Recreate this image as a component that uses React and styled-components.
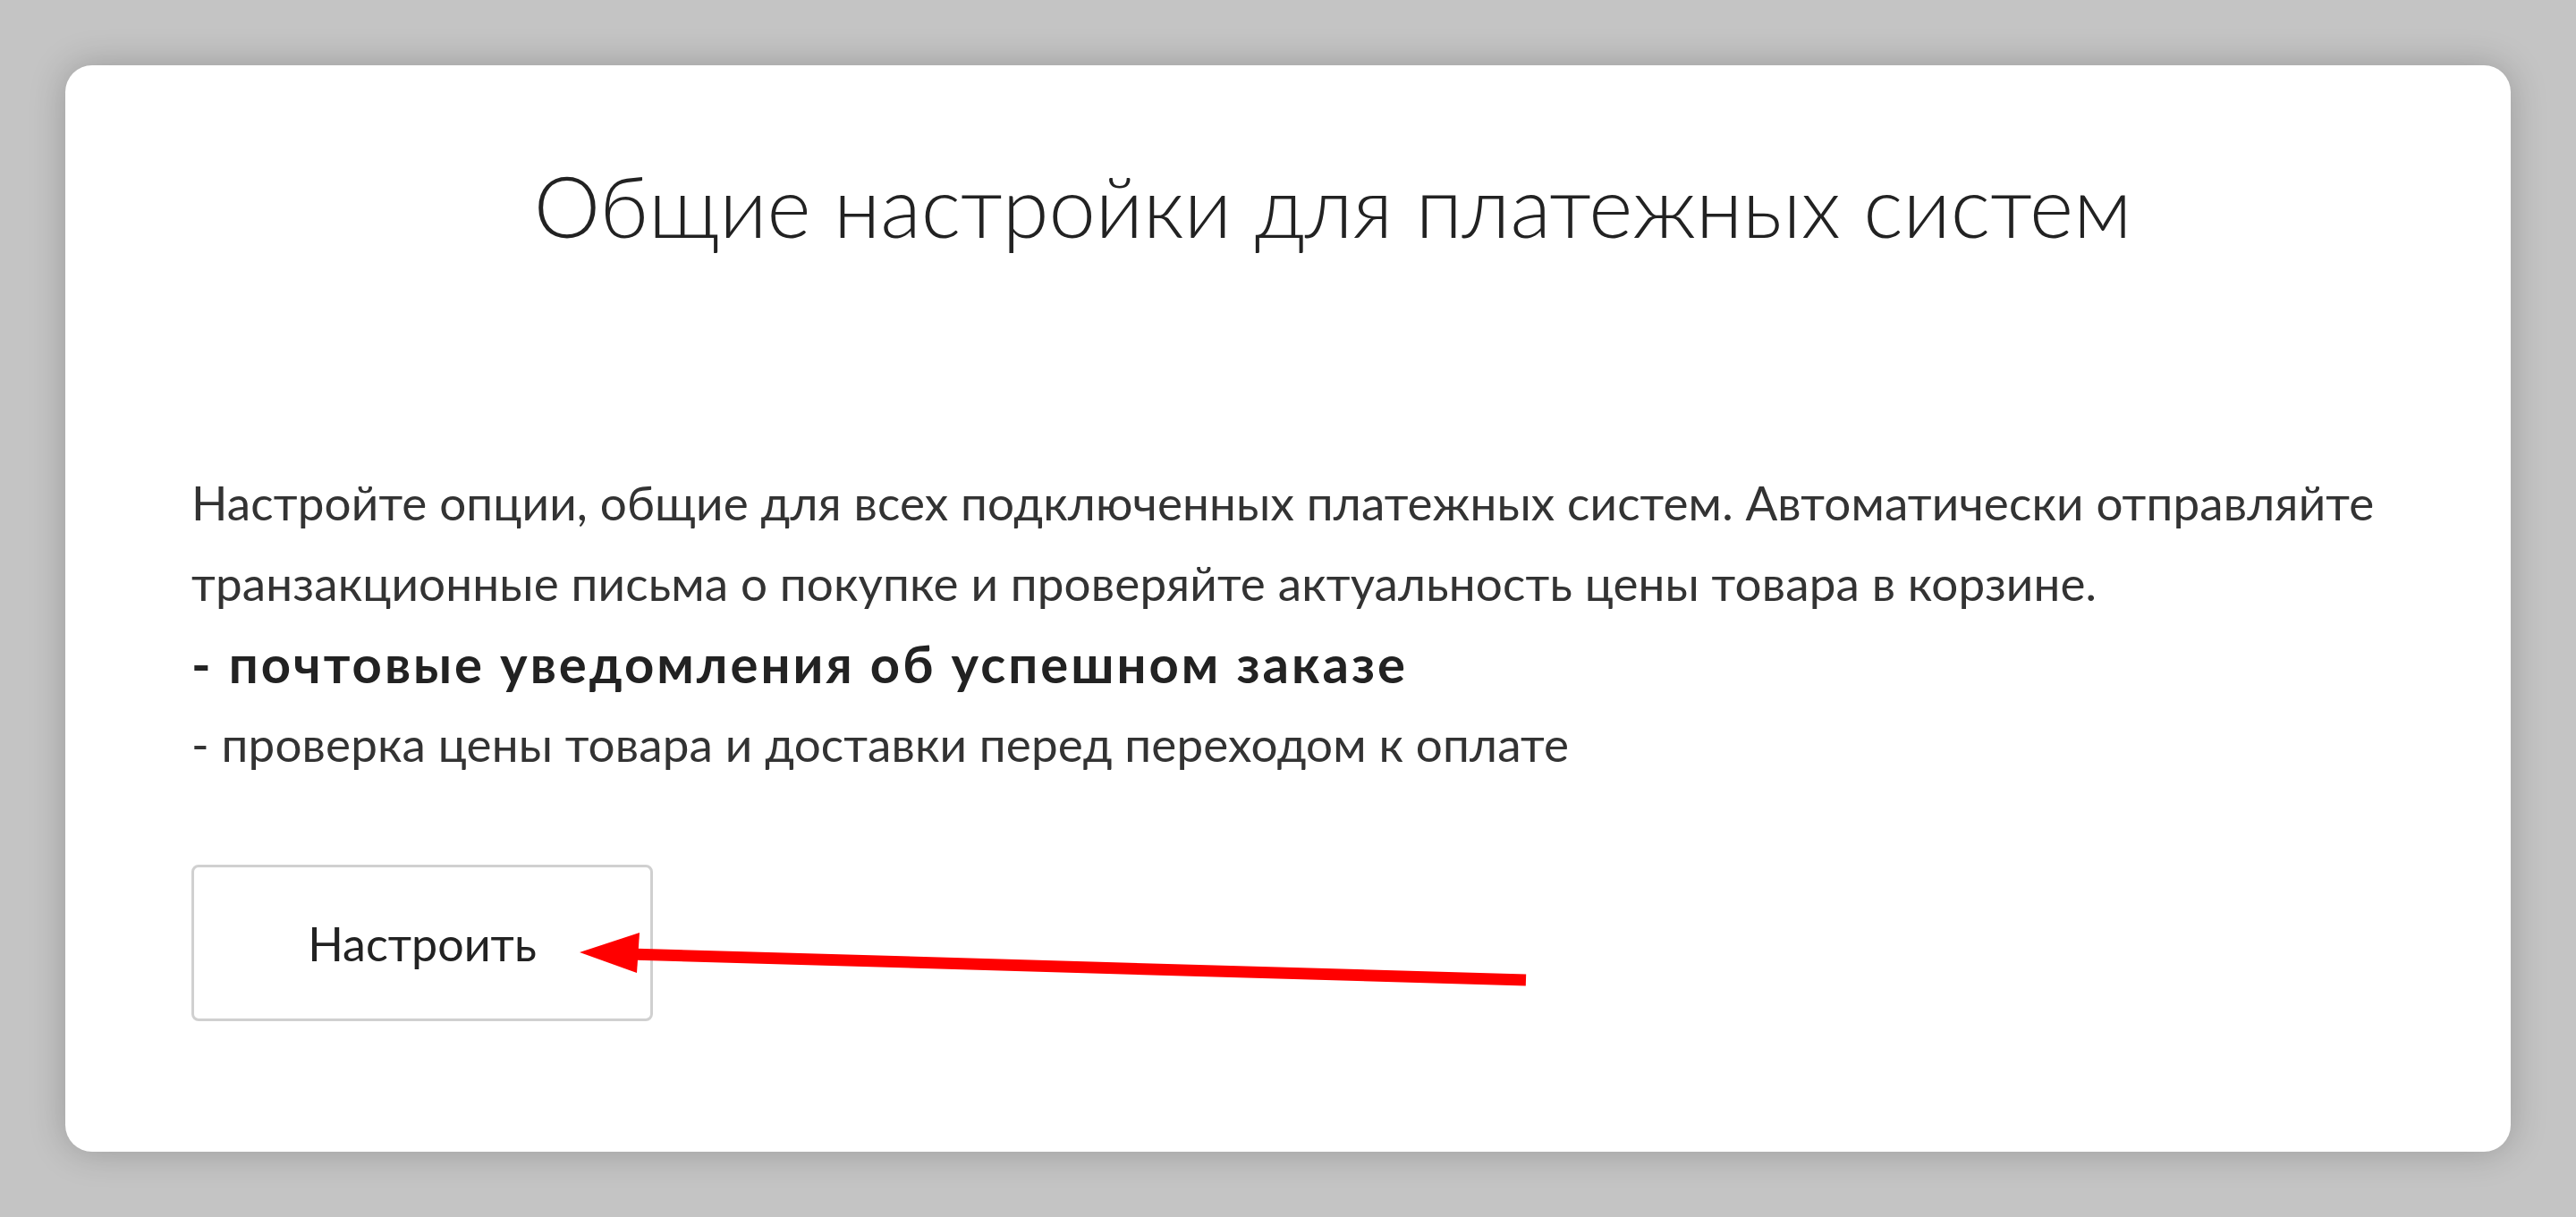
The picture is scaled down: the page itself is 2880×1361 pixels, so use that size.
import React from 'react';
import styled, { createGlobalStyle } from 'styled-components';

const GlobalStyle = createGlobalStyle`
  html, body {
    margin: 0;
    padding: 0;
    background: #c4c4c4;
  }
  * {
    box-sizing: border-box;
  }
`;

const Page = styled.div`
  display: flex;
  flex-direction: column;
  min-height: 100vh;
  padding: 73px;
  font-family: Lato, "Open Sans", "Liberation Sans", sans-serif;
  color: #2b2b2b;
`;

const Card = styled.section`
  flex: 1;
  display: flex;
  flex-direction: column;
  background: #fff;
  border-radius: 30px;
  box-shadow: 0 0 40px rgba(0, 0, 0, 0.22);
  padding: 99px 141px 0;
`;

const Title = styled.h1`
  margin: 0 0 230px;
  padding-left: 100px;
  text-align: center;
  font-size: 94px;
  font-weight: 300;
  line-height: 115px;
  color: #222;
`;

// description lines; the bold one is the highlighted feature
const Text = styled.p`
  margin: 0;
  white-space: nowrap;
  font-size: ${({ $bold }) => ($bold ? '58px' : '53px')};
  letter-spacing: ${({ $bold }) => ($bold ? '3px' : '0.15px')};
  line-height: 90px;
  font-weight: ${({ $bold }) => ($bold ? 700 : 400)};
  color: ${({ $bold }) => ($bold ? '#222' : '#333')};
`;

const Actions = styled.div`
  position: relative;
  margin-top: 90px;
`;

const SetupButton = styled.button`
  width: 516px;
  height: 175px;
  background: #fff;
  border: 3px solid #d0d0d0;
  border-radius: 8px;
  font-family: inherit;
  font-size: 52px;
  color: #222;
  cursor: pointer;
`;

const Pointer = styled.svg`
  position: absolute;
  left: 427px;
  top: 73px;
  overflow: visible;
`;

function ArrowMark() {
  return (
    <Pointer width="1072" height="65" viewBox="0 0 1072 65">
      <line x1="62" y1="27" x2="1065" y2="56" stroke="#ff0000" strokeWidth="13" />
      <polygon points="7,25 74,3 71,48" fill="#ff0000" />
    </Pointer>
  );
}

export default function App() {
  return (
    <>
      <GlobalStyle />
      <Page>
        <Card>
          <Title>Общие настройки для платежных систем</Title>
          <Text>
            Настройте опции, общие для всех подключенных платежных систем. Автоматически отправляйте
            <br />
            транзакционные письма о покупке и проверяйте актуальность цены товара в корзине.
          </Text>
          <Text $bold>- почтовые уведомления об успешном заказе</Text>
          <Text>- проверка цены товара и доставки перед переходом к оплате</Text>
          <Actions>
            <SetupButton>Настроить</SetupButton>
            <ArrowMark />
          </Actions>
        </Card>
      </Page>
    </>
  );
}
